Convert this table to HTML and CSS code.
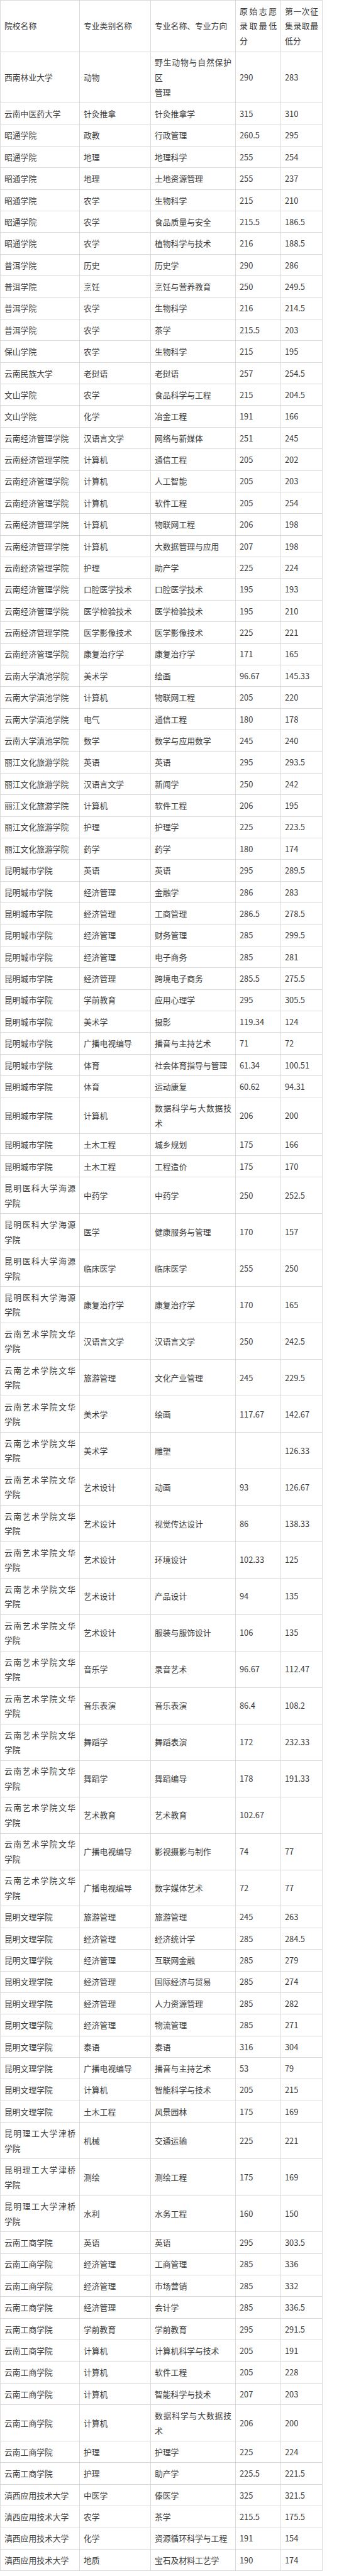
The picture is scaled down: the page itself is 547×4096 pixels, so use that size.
FILE: index.html
```html
<!DOCTYPE html>
<html lang="zh-CN">
<head>
<meta charset="utf-8">
<title>录取最低分</title>
<link rel="stylesheet" href="styles.css">
</head>
<body>
<table class="score-table">
<colgroup>
<col class="c1"><col class="c2"><col class="c3"><col class="c4"><col class="c5">
</colgroup>
<tbody>
<tr><td>院校名称</td><td>专业类别名称</td><td>专业名称、专业方向</td><td>原始志愿录取最低分</td><td>第一次征集录取最低分</td></tr>
<tr><td>西南林业大学</td><td>动物</td><td>野生动物与自然保护区<br>管理</td><td>290</td><td>283</td></tr>
<tr><td>云南中医药大学</td><td>针灸推拿</td><td>针灸推拿学</td><td>315</td><td>310</td></tr>
<tr><td>昭通学院</td><td>政教</td><td>行政管理</td><td>260.5</td><td>295</td></tr>
<tr><td>昭通学院</td><td>地理</td><td>地理科学</td><td>255</td><td>254</td></tr>
<tr><td>昭通学院</td><td>地理</td><td>土地资源管理</td><td>255</td><td>237</td></tr>
<tr><td>昭通学院</td><td>农学</td><td>生物科学</td><td>215</td><td>210</td></tr>
<tr><td>昭通学院</td><td>农学</td><td>食品质量与安全</td><td>215.5</td><td>186.5</td></tr>
<tr><td>昭通学院</td><td>农学</td><td>植物科学与技术</td><td>216</td><td>188.5</td></tr>
<tr><td>普洱学院</td><td>历史</td><td>历史学</td><td>290</td><td>286</td></tr>
<tr><td>普洱学院</td><td>烹饪</td><td>烹饪与营养教育</td><td>250</td><td>249.5</td></tr>
<tr><td>普洱学院</td><td>农学</td><td>生物科学</td><td>216</td><td>214.5</td></tr>
<tr><td>普洱学院</td><td>农学</td><td>茶学</td><td>215.5</td><td>203</td></tr>
<tr><td>保山学院</td><td>农学</td><td>生物科学</td><td>215</td><td>195</td></tr>
<tr><td>云南民族大学</td><td>老挝语</td><td>老挝语</td><td>257</td><td>254.5</td></tr>
<tr><td>文山学院</td><td>农学</td><td>食品科学与工程</td><td>215</td><td>204.5</td></tr>
<tr><td>文山学院</td><td>化学</td><td>冶金工程</td><td>191</td><td>166</td></tr>
<tr><td>云南经济管理学院</td><td>汉语言文学</td><td>网络与新媒体</td><td>251</td><td>245</td></tr>
<tr><td>云南经济管理学院</td><td>计算机</td><td>通信工程</td><td>205</td><td>202</td></tr>
<tr><td>云南经济管理学院</td><td>计算机</td><td>人工智能</td><td>205</td><td>203</td></tr>
<tr><td>云南经济管理学院</td><td>计算机</td><td>软件工程</td><td>205</td><td>254</td></tr>
<tr><td>云南经济管理学院</td><td>计算机</td><td>物联网工程</td><td>206</td><td>198</td></tr>
<tr><td>云南经济管理学院</td><td>计算机</td><td>大数据管理与应用</td><td>207</td><td>198</td></tr>
<tr><td>云南经济管理学院</td><td>护理</td><td>助产学</td><td>225</td><td>224</td></tr>
<tr><td>云南经济管理学院</td><td>口腔医学技术</td><td>口腔医学技术</td><td>195</td><td>193</td></tr>
<tr><td>云南经济管理学院</td><td>医学检验技术</td><td>医学检验技术</td><td>195</td><td>210</td></tr>
<tr><td>云南经济管理学院</td><td>医学影像技术</td><td>医学影像技术</td><td>225</td><td>221</td></tr>
<tr><td>云南经济管理学院</td><td>康复治疗学</td><td>康复治疗学</td><td>171</td><td>165</td></tr>
<tr><td>云南大学滇池学院</td><td>美术学</td><td>绘画</td><td>96.67</td><td>145.33</td></tr>
<tr><td>云南大学滇池学院</td><td>计算机</td><td>物联网工程</td><td>205</td><td>220</td></tr>
<tr><td>云南大学滇池学院</td><td>电气</td><td>通信工程</td><td>180</td><td>178</td></tr>
<tr><td>云南大学滇池学院</td><td>数学</td><td>数学与应用数学</td><td>245</td><td>240</td></tr>
<tr><td>丽江文化旅游学院</td><td>英语</td><td>英语</td><td>295</td><td>293.5</td></tr>
<tr><td>丽江文化旅游学院</td><td>汉语言文学</td><td>新闻学</td><td>250</td><td>242</td></tr>
<tr><td>丽江文化旅游学院</td><td>计算机</td><td>软件工程</td><td>206</td><td>195</td></tr>
<tr><td>丽江文化旅游学院</td><td>护理</td><td>护理学</td><td>225</td><td>223.5</td></tr>
<tr><td>丽江文化旅游学院</td><td>药学</td><td>药学</td><td>180</td><td>174</td></tr>
<tr><td>昆明城市学院</td><td>英语</td><td>英语</td><td>295</td><td>289.5</td></tr>
<tr><td>昆明城市学院</td><td>经济管理</td><td>金融学</td><td>286</td><td>283</td></tr>
<tr><td>昆明城市学院</td><td>经济管理</td><td>工商管理</td><td>286.5</td><td>278.5</td></tr>
<tr><td>昆明城市学院</td><td>经济管理</td><td>财务管理</td><td>285</td><td>299.5</td></tr>
<tr><td>昆明城市学院</td><td>经济管理</td><td>电子商务</td><td>285</td><td>281</td></tr>
<tr><td>昆明城市学院</td><td>经济管理</td><td>跨境电子商务</td><td>285.5</td><td>275.5</td></tr>
<tr><td>昆明城市学院</td><td>学前教育</td><td>应用心理学</td><td>295</td><td>305.5</td></tr>
<tr><td>昆明城市学院</td><td>美术学</td><td>摄影</td><td>119.34</td><td>124</td></tr>
<tr><td>昆明城市学院</td><td>广播电视编导</td><td>播音与主持艺术</td><td>71</td><td>72</td></tr>
<tr><td>昆明城市学院</td><td>体育</td><td>社会体育指导与管理</td><td>61.34</td><td>100.51</td></tr>
<tr><td>昆明城市学院</td><td>体育</td><td>运动康复</td><td>60.62</td><td>94.31</td></tr>
<tr><td>昆明城市学院</td><td>计算机</td><td>数据科学与大数据技术</td><td>206</td><td>200</td></tr>
<tr><td>昆明城市学院</td><td>土木工程</td><td>城乡规划</td><td>175</td><td>166</td></tr>
<tr><td>昆明城市学院</td><td>土木工程</td><td>工程造价</td><td>175</td><td>170</td></tr>
<tr><td>昆明医科大学海源学院</td><td>中药学</td><td>中药学</td><td>250</td><td>252.5</td></tr>
<tr><td>昆明医科大学海源学院</td><td>医学</td><td>健康服务与管理</td><td>170</td><td>157</td></tr>
<tr><td>昆明医科大学海源学院</td><td>临床医学</td><td>临床医学</td><td>255</td><td>250</td></tr>
<tr><td>昆明医科大学海源学院</td><td>康复治疗学</td><td>康复治疗学</td><td>170</td><td>165</td></tr>
<tr><td>云南艺术学院文华学院</td><td>汉语言文学</td><td>汉语言文学</td><td>250</td><td>242.5</td></tr>
<tr><td>云南艺术学院文华学院</td><td>旅游管理</td><td>文化产业管理</td><td>245</td><td>229.5</td></tr>
<tr><td>云南艺术学院文华学院</td><td>美术学</td><td>绘画</td><td>117.67</td><td>142.67</td></tr>
<tr><td>云南艺术学院文华学院</td><td>美术学</td><td>雕塑</td><td></td><td>126.33</td></tr>
<tr><td>云南艺术学院文华学院</td><td>艺术设计</td><td>动画</td><td>93</td><td>126.67</td></tr>
<tr><td>云南艺术学院文华学院</td><td>艺术设计</td><td>视觉传达设计</td><td>86</td><td>138.33</td></tr>
<tr><td>云南艺术学院文华学院</td><td>艺术设计</td><td>环境设计</td><td>102.33</td><td>125</td></tr>
<tr><td>云南艺术学院文华学院</td><td>艺术设计</td><td>产品设计</td><td>94</td><td>135</td></tr>
<tr><td>云南艺术学院文华学院</td><td>艺术设计</td><td>服装与服饰设计</td><td>106</td><td>135</td></tr>
<tr><td>云南艺术学院文华学院</td><td>音乐学</td><td>录音艺术</td><td>96.67</td><td>112.47</td></tr>
<tr><td>云南艺术学院文华学院</td><td>音乐表演</td><td>音乐表演</td><td>86.4</td><td>108.2</td></tr>
<tr><td>云南艺术学院文华学院</td><td>舞蹈学</td><td>舞蹈表演</td><td>172</td><td>232.33</td></tr>
<tr><td>云南艺术学院文华学院</td><td>舞蹈学</td><td>舞蹈编导</td><td>178</td><td>191.33</td></tr>
<tr><td>云南艺术学院文华学院</td><td>艺术教育</td><td>艺术教育</td><td>102.67</td><td></td></tr>
<tr><td>云南艺术学院文华学院</td><td>广播电视编导</td><td>影视摄影与制作</td><td>74</td><td>77</td></tr>
<tr><td>云南艺术学院文华学院</td><td>广播电视编导</td><td>数字媒体艺术</td><td>72</td><td>77</td></tr>
<tr><td>昆明文理学院</td><td>旅游管理</td><td>旅游管理</td><td>245</td><td>263</td></tr>
<tr><td>昆明文理学院</td><td>经济管理</td><td>经济统计学</td><td>285</td><td>284.5</td></tr>
<tr><td>昆明文理学院</td><td>经济管理</td><td>互联网金融</td><td>285</td><td>279</td></tr>
<tr><td>昆明文理学院</td><td>经济管理</td><td>国际经济与贸易</td><td>285</td><td>274</td></tr>
<tr><td>昆明文理学院</td><td>经济管理</td><td>人力资源管理</td><td>285</td><td>282</td></tr>
<tr><td>昆明文理学院</td><td>经济管理</td><td>物流管理</td><td>285</td><td>271</td></tr>
<tr><td>昆明文理学院</td><td>泰语</td><td>泰语</td><td>316</td><td>304</td></tr>
<tr><td>昆明文理学院</td><td>广播电视编导</td><td>播音与主持艺术</td><td>53</td><td>79</td></tr>
<tr><td>昆明文理学院</td><td>计算机</td><td>智能科学与技术</td><td>205</td><td>215</td></tr>
<tr><td>昆明文理学院</td><td>土木工程</td><td>风景园林</td><td>175</td><td>169</td></tr>
<tr><td>昆明理工大学津桥学院</td><td>机械</td><td>交通运输</td><td>225</td><td>221</td></tr>
<tr><td>昆明理工大学津桥学院</td><td>测绘</td><td>测绘工程</td><td>175</td><td>169</td></tr>
<tr><td>昆明理工大学津桥学院</td><td>水利</td><td>水务工程</td><td>160</td><td>150</td></tr>
<tr><td>云南工商学院</td><td>英语</td><td>英语</td><td>295</td><td>303.5</td></tr>
<tr><td>云南工商学院</td><td>经济管理</td><td>工商管理</td><td>285</td><td>336</td></tr>
<tr><td>云南工商学院</td><td>经济管理</td><td>市场营销</td><td>285</td><td>332</td></tr>
<tr><td>云南工商学院</td><td>经济管理</td><td>会计学</td><td>285</td><td>336.5</td></tr>
<tr><td>云南工商学院</td><td>学前教育</td><td>学前教育</td><td>295</td><td>291.5</td></tr>
<tr><td>云南工商学院</td><td>计算机</td><td>计算机科学与技术</td><td>205</td><td>191</td></tr>
<tr><td>云南工商学院</td><td>计算机</td><td>软件工程</td><td>205</td><td>228</td></tr>
<tr><td>云南工商学院</td><td>计算机</td><td>智能科学与技术</td><td>207</td><td>203</td></tr>
<tr><td>云南工商学院</td><td>计算机</td><td>数据科学与大数据技术</td><td>206</td><td>200</td></tr>
<tr><td>云南工商学院</td><td>护理</td><td>护理学</td><td>225</td><td>224</td></tr>
<tr><td>云南工商学院</td><td>护理</td><td>助产学</td><td>225.5</td><td>221.5</td></tr>
<tr><td>滇西应用技术大学</td><td>中医学</td><td>傣医学</td><td>325</td><td>321.5</td></tr>
<tr><td>滇西应用技术大学</td><td>农学</td><td>茶学</td><td>215.5</td><td>175.5</td></tr>
<tr><td>滇西应用技术大学</td><td>化学</td><td>资源循环科学与工程</td><td>191</td><td>154</td></tr>
<tr><td>滇西应用技术大学</td><td>地质</td><td>宝石及材料工艺学</td><td>190</td><td>174</td></tr>
</tbody>
</table>
</body>
</html>
```

FILE: styles.css
```css
html, body {
  margin: 0;
  padding: 0;
  background: #ffffff;
}

.score-table {
  width: 512px;
  table-layout: fixed;
  border-collapse: collapse;
  font-family: "Noto Sans CJK SC", "Noto Sans", sans-serif;
  font-size: 12.8px;
  line-height: 23.6px;
  color: #3a3a3a;
}

.c1 { width: 126px; }
.c2 { width: 113px; }
.c3 { width: 135px; }
.c4 { width: 72px; }
.c5 { width: 66px; }

.score-table td {
  border: 1px solid #dadada;
  padding: 4.9px 6px;
  vertical-align: middle;
  text-align: justify;
  word-break: break-all;
}
```
